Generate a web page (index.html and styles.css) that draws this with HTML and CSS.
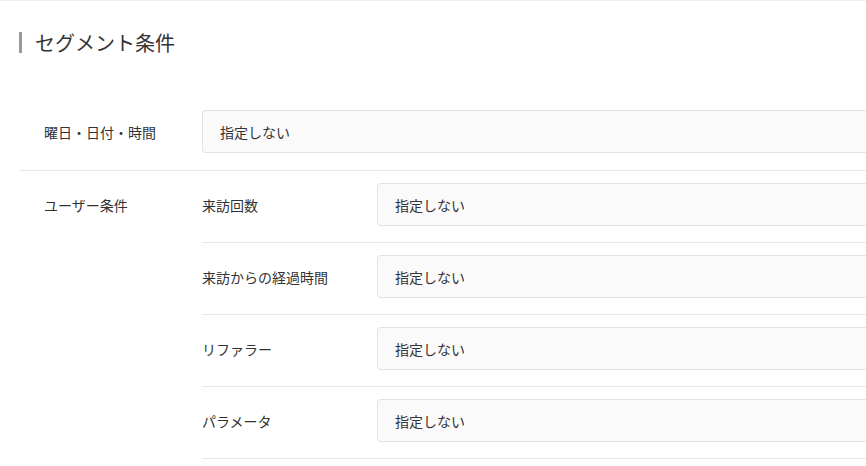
FILE: index.html
```html
<!DOCTYPE html>
<html lang="ja">
<head>
<meta charset="utf-8">
<title>セグメント条件</title>
<link rel="stylesheet" href="styles.css">
</head>
<body>
<div class="card">
  <h2 class="title">セグメント条件</h2>
  <div class="cond">
    <div class="cond-label">曜日・日付・時間</div>
    <div class="cond-body single">
      <div class="select">指定しない</div>
    </div>
  </div>
  <div class="cond">
    <div class="cond-label">ユーザー条件</div>
    <div class="cond-body">
      <div class="subrow">
        <div class="sub-label">来訪回数</div>
        <div class="select">指定しない</div>
      </div>
      <div class="subrow">
        <div class="sub-label">来訪からの経過時間</div>
        <div class="select">指定しない</div>
      </div>
      <div class="subrow">
        <div class="sub-label">リファラー</div>
        <div class="select">指定しない</div>
      </div>
      <div class="subrow">
        <div class="sub-label">パラメータ</div>
        <div class="select">指定しない</div>
      </div>
    </div>
  </div>
</div>
</body>
</html>
```
FILE: styles.css
```css
html, body {
  margin: 0;
  padding: 0;
}
body {
  background: #edf1ed;
  overflow: hidden;
  font-family: "Noto Sans CJK JP", "Noto Sans", sans-serif;
  color: #333;
}
.card {
  margin-top: 1px;
  background: #fff;
  padding: 31px 0 7px 19px;
}
.title {
  margin: 0 0 45px 0;
  border-left: 3px solid #999;
  padding-left: 13px;
  font-size: 20px;
  line-height: 21px;
  height: 21px;
  font-weight: normal;
  color: #333;
}
.cond {
  display: flex;
  align-items: flex-start;
}
.cond + .cond {
  border-top: 1px solid #e6e6e6;
}
.cond-label {
  width: 183px;
  flex: none;
  box-sizing: border-box;
  padding-left: 25px;
  margin-top: 12px;
  height: 43px;
  display: flex;
  align-items: center;
  font-size: 14px;
}
.cond-body {
  flex: 1;
}
.cond-body.single {
  padding: 12px 0 17px 0;
}
.subrow {
  display: flex;
  align-items: center;
  padding: 12px 0 16px 0;
  border-bottom: 1px solid #e6e6e6;
}
.sub-label {
  width: 175px;
  flex: none;
  font-size: 14px;
}
.select {
  flex: 1;
  height: 43px;
  box-sizing: border-box;
  border: 1px solid #e3e3e3;
  border-right: none;
  border-radius: 4px 0 0 4px;
  background: #fafafa;
  padding: 0 17px;
  display: flex;
  align-items: center;
  font-size: 14px;
  color: #333;
}
```
